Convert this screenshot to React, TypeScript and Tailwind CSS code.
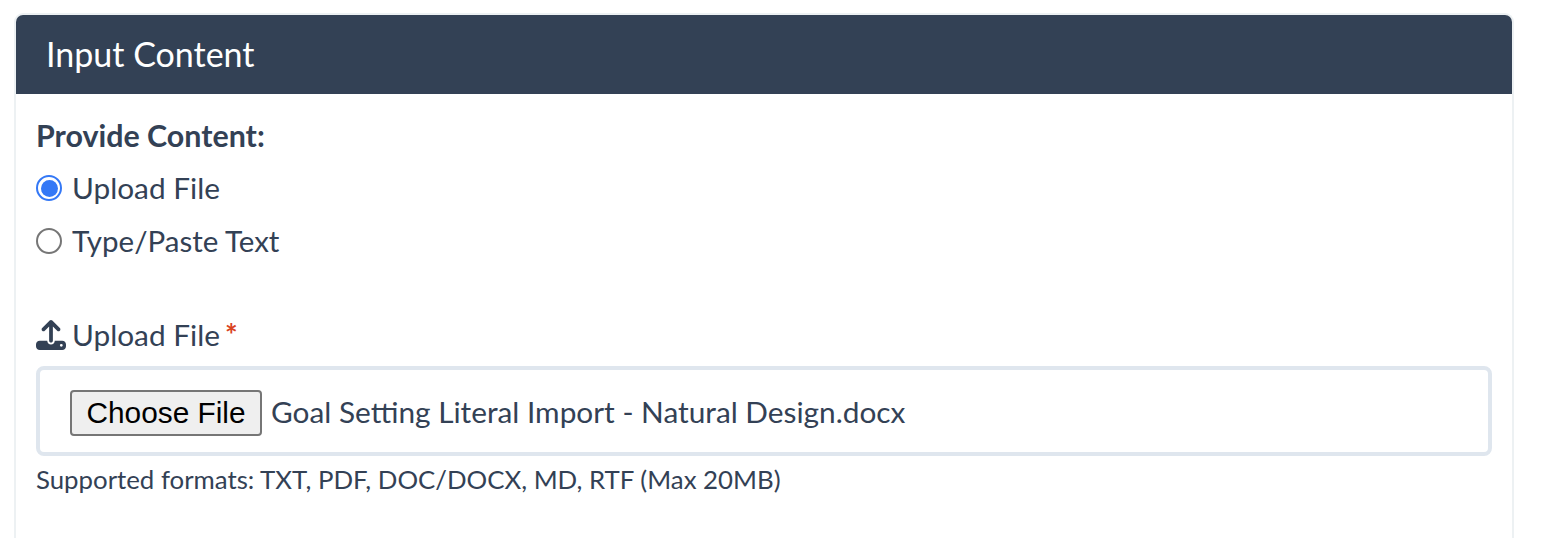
import React from "react";
import { FaUpload } from "react-icons/fa6";

const lato = "font-['Lato','Noto_Sans',sans-serif]";

export default function App() {
  return (
    <div className={`h-[538px] overflow-hidden bg-white pl-[14px] pr-[28px] pt-[13px] ${lato} text-[#334155]`}>
      <div className="h-[600px] rounded-t-[9px] border-x-2 border-t-2 border-[#edf1f3]">
        <div className="flex h-[79px] items-center rounded-t-[7px] bg-[#334155] pb-[2px] pl-[30px]">
          <h2 className="text-[34px] leading-none font-normal text-white">Input Content</h2>
        </div>
        <div className="px-[20px] pt-[24px]">
          <div className="text-[30.4px] leading-[34px] font-bold">Provide Content:</div>
          <div className="mt-[18px] flex flex-col gap-[17px]">
            <label className="flex h-[36px] items-center gap-[10px] text-[29.8px]">
              <span className="flex h-[26px] w-[26px] items-center justify-center rounded-full border-2 border-[#3478f6]">
                <span className="h-[17px] w-[17px] rounded-full bg-[#3478f6]" />
              </span>
              Upload File
            </label>
            <label className="flex h-[36px] items-center gap-[10px] text-[29.5px]">
              <span className="h-[26px] w-[26px] rounded-full border-2 border-[#767676]" />
              Type/Paste Text
            </label>
          </div>
          <div className="mt-[58px] flex h-[36px] items-center text-[29.8px]">
            <FaUpload className="mr-[6px] h-[30px] w-[30px]" />
            Upload File
            <span className="ml-[5px] font-bold text-[#d9431e]">*</span>
          </div>
          <div className="mt-[13px] flex h-[90px] items-center rounded-[8px] border-4 border-[#dfe6ee] pl-[30px] pt-[4px] text-[29.8px]">
            <button className="flex h-[46px] w-[192px] items-center justify-center rounded-[4px] border-2 border-[#767676] bg-[#efefef] font-['Liberation_Sans',sans-serif] text-[29.8px] text-black">
              Choose File
            </button>
            <span className="ml-[9px] mb-[2px]">Goal Setting Literal Import - Natural Design.docx</span>
          </div>
          <div className="mt-[6px] text-[25.8px] leading-[34px]">Supported formats: TXT, PDF, DOC/DOCX, MD, RTF (Max 20MB)</div>
        </div>
      </div>
    </div>
  );
}
